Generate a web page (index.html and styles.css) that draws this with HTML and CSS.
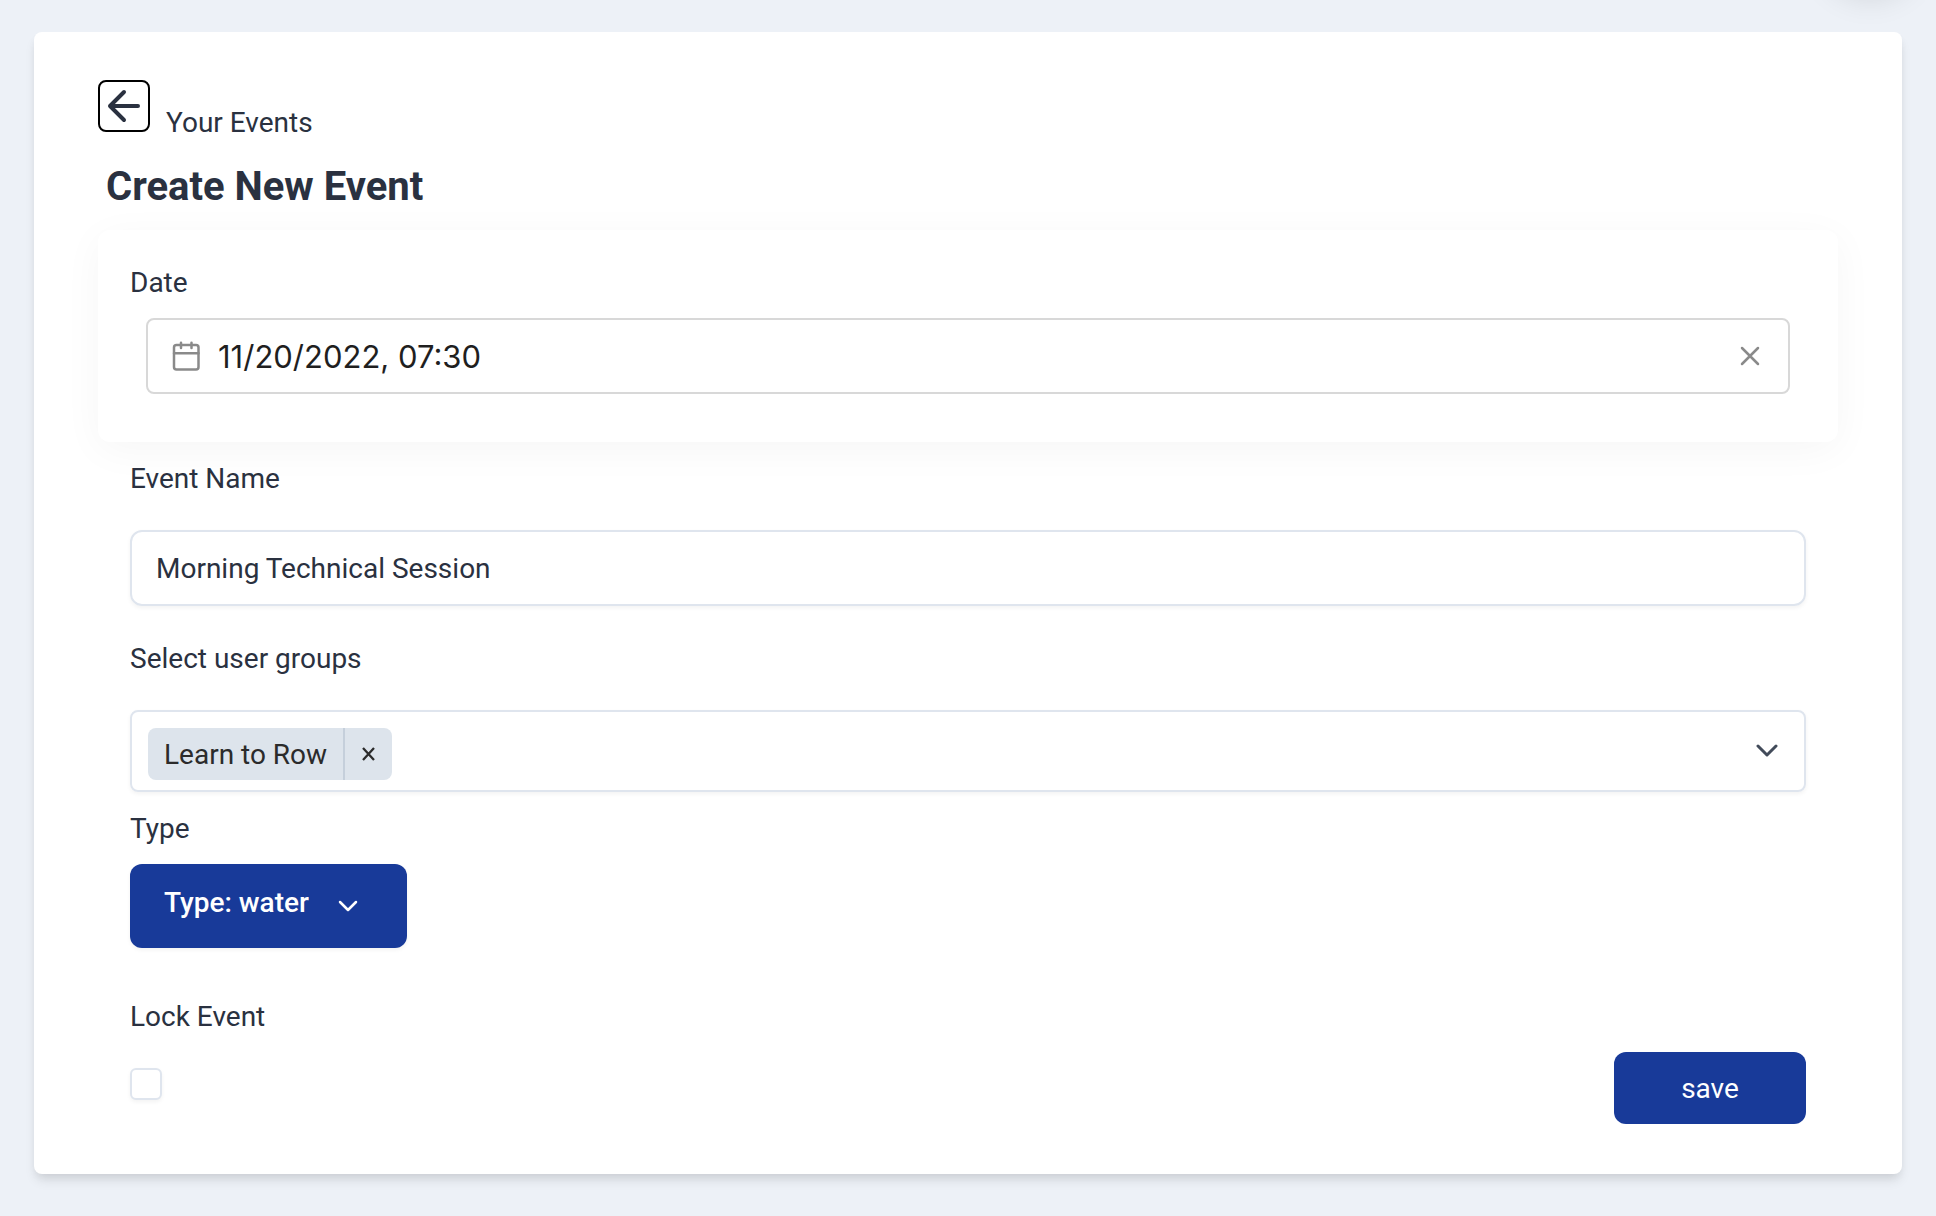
FILE: index.html
```html
<!DOCTYPE html>
<html lang="en">
<head>
  <meta charset="utf-8">
  <meta name="viewport" content="width=device-width, initial-scale=1">
  <title>Create New Event</title>
  <link rel="stylesheet" href="styles.css">
</head>
<body>
  <div class="floating-dot" aria-hidden="true"></div>
  <main class="card">
    <header class="crumb">
      <button class="back" type="button" aria-label="Back">
        <svg width="48" height="48" viewBox="0 0 24 24" fill="none" stroke="currentColor" stroke-width="2" stroke-linecap="round" stroke-linejoin="round"><path d="M19 12H5M12 19l-7-7 7-7"/></svg>
      </button>
      <span>Your Events</span>
    </header>
    <h1 class="title">Create New Event</h1>

    <form class="form">
      <section class="date-card">
        <label for="date">Date</label>
        <div class="date-box">
          <svg class="calendar" width="28" height="30" viewBox="0 0 28 30" fill="none" stroke="currentColor" stroke-width="2.500" stroke-linecap="round"><rect x="2" y="4" width="24.500" height="24.500" rx="2.500"/><path d="M2 12.300H26.500M9 1.800V7M19.500 1.800V7"/></svg>
          <input id="date" class="date-input" type="text" value="11/20/2022, 07:30">
          <button class="clear" type="button" aria-label="Clear date">
            <svg width="20" height="20" viewBox="0 0 20 20" fill="none" stroke="currentColor" stroke-width="2.500" stroke-linecap="round"><path d="M2 2l16 16M18 2L2 18"/></svg>
          </button>
        </div>
      </section>

      <div class="fields">
        <div class="field">
          <label for="name">Event Name</label>
          <input id="name" class="text-input" type="text" value="Morning Technical Session">
        </div>

        <div class="field">
          <label for="groups">Select user groups</label>
          <div class="multi">
            <span class="chip"><span class="chip-label">Learn to Row</span><button class="chip-remove" type="button" aria-label="Remove Learn to Row"><svg width="14" height="14" viewBox="0 0 14 14" fill="none" stroke="currentColor" stroke-width="2.300"><path d="M1 1l11 12M12 1L1 13"/></svg></button></span>
            <input id="groups" class="multi-input" type="text">
            <button class="multi-toggle" type="button" aria-label="Show user groups">
              <svg width="24" height="14" viewBox="0 0 24 14" fill="none" stroke="currentColor" stroke-width="3" stroke-linecap="round" stroke-linejoin="round"><path d="M2 2l9 9 9-9"/></svg>
            </button>
          </div>
        </div>

        <div class="field field-tight">
          <label for="type">Type</label>
          <div class="type">
            <select id="type" class="type-select">
              <option>Type: water</option>
            </select>
            <svg class="type-chevron" width="20" height="12" viewBox="0 0 20 12" fill="none" stroke="currentColor" stroke-width="2.500" stroke-linecap="round" stroke-linejoin="round"><path d="M2 2l8 8 8-8"/></svg>
          </div>
        </div>

        <div class="footer">
          <div class="field lock">
            <label for="lock">Lock Event</label>
            <input id="lock" class="checkbox" type="checkbox">
          </div>
          <button class="save" type="submit">save</button>
        </div>
      </div>
    </form>
  </main>
</body>
</html>
```

FILE: styles.css
```css
* {
  box-sizing: border-box;
}

body {
  margin: 0;
  padding: 32px 34px;
  background: #edf1f7;
  color: #2a3140;
  font: 28px/42px Roboto, sans-serif;
}

button,
input,
select {
  margin: 0;
  padding: 0;
  border: 0;
  background: none;
  color: inherit;
  font: inherit;
}

input:focus,
select:focus {
  outline: none;
}

svg {
  display: block;
  flex: none;
}

/* round widget parked above the page edge; only its shadow shows */
.floating-dot {
  position: absolute;
  top: -102px;
  right: 18px;
  width: 96px;
  height: 96px;
  border-radius: 50%;
  box-shadow: 0 4px 32px rgba(0, 0, 0, 0.12);
}

.card {
  padding: 48px 64px 50px;
  border-radius: 8px;
  background: #fff;
  box-shadow: 0 8px 12px -2px rgba(0, 0, 0, 0.1), 0 4px 8px -2px rgba(0, 0, 0, 0.06);
}

.crumb {
  display: flex;
  align-items: flex-end;
  gap: 16px;
}

.back {
  display: grid;
  place-items: center;
  width: 52px;
  height: 52px;
  margin-bottom: 12px;
  border: 2px solid #000;
  border-radius: 8px;
}

.title {
  margin: 19px 8px;
  font-size: 40px;
  line-height: 48px;
  font-weight: 700;
}

.date-card {
  display: grid;
  gap: 14px;
  padding: 32px 32px 48px;
  border-radius: 12px;
  background: #fff;
  box-shadow: 0 8px 40px rgba(0, 0, 0, 0.04);
}

.date-box {
  display: flex;
  align-items: center;
  height: 76px;
  margin: 0 16px;
  padding: 0 28px 0 24px;
  border: 2px solid #d8d8d8;
  border-radius: 8px;
}

.calendar,
.clear {
  color: #8a8a8a;
}

.date-input {
  flex: 1;
  min-width: 0;
  height: 72px;
  padding-left: 18px;
  color: #1f1f1f;
  font-family: Inter, sans-serif;
  font-size: 31px;
}

.fields {
  display: grid;
  gap: 32px;
  padding: 16px 32px 0;
}

.field {
  display: grid;
  gap: 30px;
}

.field-tight {
  gap: 14px;
  margin: -16px 0 16px;
}

.text-input,
.multi,
.checkbox {
  border: 2px solid #dfe5ee;
  box-shadow: 0 2px 4px rgba(0, 0, 0, 0.05);
}

.text-input {
  width: 100%;
  height: 76px;
  padding: 0 24px;
  border-radius: 12px;
}

.multi {
  display: flex;
  align-items: center;
  min-height: 82px;
  padding: 6px 24px 0 16px;
  border-radius: 8px;
}

.chip {
  display: flex;
  height: 52px;
  border-radius: 8px;
  background: #dde4ec;
  color: #2b2b2b;
}

.chip-label {
  padding: 6px 16px 4px;
}

.chip-remove {
  display: grid;
  place-items: center;
  width: 49px;
  border-left: 2px solid #c5cfdb;
}

.multi-input {
  flex: 1;
  min-width: 0;
}

.multi-toggle {
  margin-bottom: 6px;
  color: #424b5a;
}

.type {
  position: relative;
  justify-self: start;
}

.type-select {
  display: block;
  height: 84px;
  padding: 0 98px 6px 34px;
  border-radius: 12px;
  appearance: none;
  background: #183a99;
  box-shadow: 0 2px 4px rgba(0, 0, 0, 0.05);
  color: #fff;
  font-weight: 500;
}

.type-chevron {
  position: absolute;
  right: 49px;
  top: 36px;
  color: #fff;
  pointer-events: none;
}

.footer {
  display: flex;
  align-items: flex-end;
  justify-content: space-between;
}

.lock {
  margin-bottom: 24px;
}

.checkbox {
  width: 32px;
  height: 32px;
  border-radius: 6px;
  appearance: none;
  background: #fff;
}

.save {
  width: 192px;
  height: 72px;
  padding-top: 2px;
  border-radius: 12px;
  background: #183a99;
  color: #fff;
}
```
